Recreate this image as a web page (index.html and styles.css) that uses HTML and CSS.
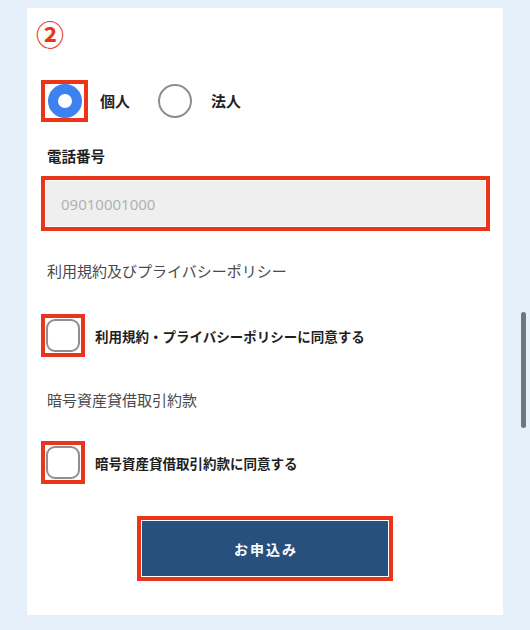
FILE: index.html
```html
<!DOCTYPE html>
<html lang="ja">
<head>
    <meta charset="UTF-8">
    <meta name="viewport" content="width=device-width, initial-scale=1.0">
    <title>お申込み</title>
    <link rel="stylesheet" href="styles.css">
</head>
<body>
    <div class="card">
        <div class="step">②</div>

        <div class="radio-row">
            <span class="mark mark-radio"><span class="radio checked"></span></span>
            <span class="radio-label">個人</span>
            <span class="radio"></span>
            <span class="radio-label">法人</span>
        </div>

        <div class="field-label">電話番号</div>
        <div class="mark mark-input">
            <input class="text-input" type="text" placeholder="09010001000">
        </div>

        <div class="section-label">利用規約及びプライバシーポリシー</div>
        <div class="check-row">
            <span class="mark mark-check"><span class="checkbox"></span></span>
            <span class="check-label">利用規約・プライバシーポリシーに同意する</span>
        </div>

        <div class="section-label">暗号資産貸借取引約款</div>
        <div class="check-row check-row-last">
            <span class="mark mark-check"><span class="checkbox"></span></span>
            <span class="check-label">暗号資産貸借取引約款に同意する</span>
        </div>

        <div class="submit-wrap">
            <span class="mark mark-button"><button class="submit-btn">お申込み</button></span>
        </div>
    </div>

    <div class="scrollbar"></div>
</body>
</html>
```

FILE: styles.css
```css
:root {
    --page-bg: #e5f0fb;
    --card-bg: #ffffff;
    --mark-red: #ea3519;
    --radio-blue: #3d82ee;
    --gray-border: #8f8f8f;
    --text-color: #1f1f1f;
    --sub-text: #4a4a4a;
    --button-bg: #26507e;
}

* {
    box-sizing: border-box;
    margin: 0;
    padding: 0;
}

body {
    font-family: "Noto Sans CJK JP", "Noto Sans", sans-serif;
    background: var(--page-bg);
    color: var(--text-color);
    width: 530px;
    height: 630px;
    overflow: hidden;
    position: relative;
}

.card {
    background: var(--card-bg);
    margin: 8px 27px 0 27px;
    height: 607px;
    padding: 11px 14px 0 14px;
}

.step {
    color: var(--mark-red);
    font-size: 28px;
    line-height: 30px;
    height: 30px;
    margin-left: -5px;
    font-weight: 700;
}

/* annotation boxes */
.mark {
    display: inline-flex;
    align-items: center;
    justify-content: center;
    border: 4px solid var(--mark-red);
    background: #fff;
}

.mark-radio {
    width: 47px;
    height: 42px;
}

.mark-check {
    width: 44px;
    height: 43px;
}

.mark-input {
    display: flex;
    align-items: stretch;
    width: 449px;
    height: 55px;
    padding: 1px;
    margin-top: 10px;
}

.mark-button {
    width: 256px;
    height: 65px;
    padding: 1px;
}

.radio-row {
    display: flex;
    align-items: center;
    margin-top: 31px;
    height: 42px;
}

.radio {
    width: 34px;
    height: 34px;
    border-radius: 50%;
    border: 2px solid var(--gray-border);
    flex-shrink: 0;
}

.radio.checked {
    border: 10px solid var(--radio-blue);
    background: #fff;
    margin-left: 1px;
}

.radio-label {
    font-size: 15px;
    font-weight: 700;
    margin-left: 12px;
    margin-right: 28px;
    line-height: 20px;
}

.radio + .radio-label {
    margin-left: 19px;
}

.field-label {
    font-size: 14.5px;
    font-weight: 700;
    line-height: 20px;
    margin-top: 24px;
    padding-left: 6px;
}

.text-input {
    flex: 1;
    height: 100%;
    border: none;
    background: #efefef;
    font-family: "Noto Sans", "Noto Sans CJK JP", sans-serif;
    font-size: 15px;
    padding-left: 15px;
    color: var(--text-color);
    outline: none;
}

.text-input::placeholder {
    color: #b2b2b2;
}

.section-label {
    font-size: 15px;
    line-height: 20px;
    color: var(--sub-text);
    padding-left: 6px;
    margin-top: 30px;
}

.check-row + .section-label {
    margin-top: 33px;
}

.check-row {
    display: flex;
    align-items: center;
    margin-top: 33px;
}

.check-row-last {
    margin-top: 31px;
}

.checkbox {
    width: 34px;
    height: 33px;
    border: 2px solid var(--gray-border);
    border-radius: 9px;
}

.check-label {
    font-size: 13.5px;
    font-weight: 700;
    margin-left: 10px;
    line-height: 20px;
}

.submit-wrap {
    display: flex;
    justify-content: center;
    margin-top: 32px;
}

.submit-btn {
    width: 100%;
    height: 100%;
    border: none;
    background: var(--button-bg);
    color: #fff;
    font-family: "Noto Sans CJK JP", sans-serif;
    font-size: 14px;
    font-weight: 700;
    letter-spacing: 2px;
    padding-left: 2px;
}

/* overlay scroll indicator */
.scrollbar {
    position: absolute;
    left: 521px;
    top: 312px;
    width: 5px;
    height: 116px;
    border-radius: 3px;
    background: #6e7681;
}
```
